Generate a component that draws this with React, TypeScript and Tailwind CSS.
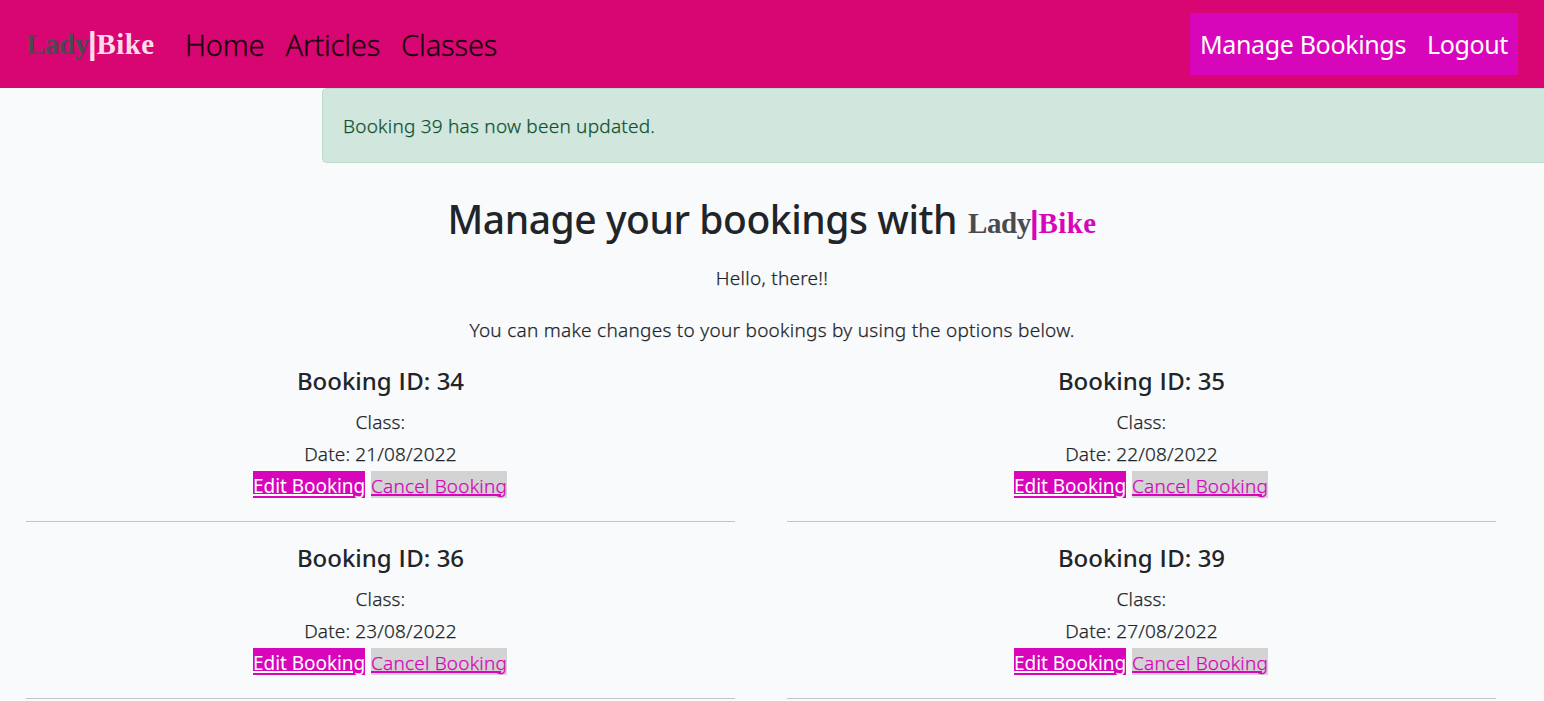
import type { ReactNode } from "react";

type Booking = { id: number; date: string };

const bookings: Booking[] = [
  { id: 34, date: "21/08/2022" },
  { id: 35, date: "22/08/2022" },
  { id: 36, date: "23/08/2022" },
  { id: 39, date: "27/08/2022" },
];

function Brand({ accent }: { accent: string }) {
  return (
    <span className="flex whitespace-nowrap font-['Liberation_Serif',serif] text-[29px] leading-[36px] font-bold">
      <span className="tracking-[-0.4px] text-[#4a4a4f]">Lady</span>
      <span className={accent}>
        <span className="-ml-[1px] font-['Liberation_Sans',sans-serif] text-[31px] leading-none">|</span>
        <span className="tracking-[0.4px]">Bike</span>
      </span>
    </span>
  );
}

function NavLink({ children }: { children: ReactNode }) {
  return (
    <a href="#" className="whitespace-nowrap text-[29px] leading-[45px] font-light tracking-[-0.15px] text-[#16000c] [-webkit-text-stroke:0.3px]">
      {children}
    </a>
  );
}

function Navbar() {
  return (
    <nav className="flex h-[88px] items-center bg-[#d80672] pr-[26px] pl-[26px]">
      <a href="#" className="mr-[30px] flex w-[129px]">
        <Brand accent="text-[#ffdbe9]" />
      </a>
      <div className="flex gap-[21px] pt-px">
        <NavLink>Home</NavLink>
        <NavLink>Articles</NavLink>
        <NavLink>Classes</NavLink>
      </div>
      <div className="ml-auto flex h-[62px] w-[328px] items-center justify-between bg-[#d706ba] px-[10px] text-[25px] font-normal tracking-[-0.35px] text-white">
        <a href="#" className="whitespace-nowrap">Manage Bookings</a>
        <a href="#" className="whitespace-nowrap">Logout</a>
      </div>
    </nav>
  );
}

function BookingCard({ id, date }: Booking) {
  return (
    <article className="h-[177px] text-center">
      <h2 className="mb-[10px] pt-[1px] text-[24px] leading-[30px] font-medium tracking-normal [-webkit-text-stroke:0px]">
        Booking <span className="mx-[0.5px] font-['Open_Sans',sans-serif] leading-none font-semibold">I</span>D: {id}
      </h2>
      <p className="tracking-[0.15px]">Class:</p>
      <p className="tracking-[0.15px]">Date: {date}</p>
      <p className="mt-[1px] flex justify-center gap-[6px] pr-[1px] tracking-[0.2px]">
        <a href="#" className="h-[27px] w-[112px] bg-[#d706ba] leading-[31px] tracking-[-0.05px] whitespace-nowrap font-normal text-white underline decoration-2 underline-offset-1 [-webkit-text-stroke:0px]">Edit Booking</a>
        <a href="#" className="h-[27px] w-[136px] bg-[#d3d3d3] leading-[31px] whitespace-nowrap text-[#d706ba] underline decoration-2 underline-offset-1">Cancel Booking</a>
      </p>
      <hr className="mt-[23px] border-[#c2c5c8]" />
    </article>
  );
}

export default function App() {
  return (
    <div className="h-[701px] overflow-hidden bg-[#f9fafc] font-['Noto_Sans',sans-serif] text-[19px] leading-[32px] font-light text-[#212529]">
      <Navbar />
      <div className="ml-[322px] h-[75px] rounded-l-[5px] border border-r-0 border-[#badbcc] bg-[#d1e7dd] pt-[21px] pl-[20px] tracking-[0.23px] text-[#0f5132] [-webkit-text-stroke:0.25px]">
        Booking 39 has now been updated.
      </div>
      <main className="pt-[32px] tracking-[0.27px] [-webkit-text-stroke:0.25px]">
        <h1 className="flex h-[48px] items-center justify-center gap-[11px] text-[39px] leading-[48px] font-medium tracking-[-0.43px] whitespace-nowrap [-webkit-text-stroke:0px]">
          Manage your bookings with
          <span className="flex pt-[8px] tracking-normal">
            <Brand accent="text-[#d706ba]" />
          </span>
        </h1>
        <p className="mt-[19px] text-center">Hello, there!!</p>
        <p className="mt-[20px] text-center">You can make changes to your bookings by using the options below.</p>
        <section className="mt-[19px] grid grid-cols-[709px_709px] gap-x-[52px] pl-[26px]">
          {bookings.map((b) => (
            <BookingCard key={b.id} id={b.id} date={b.date} />
          ))}
        </section>
      </main>
    </div>
  );
}
